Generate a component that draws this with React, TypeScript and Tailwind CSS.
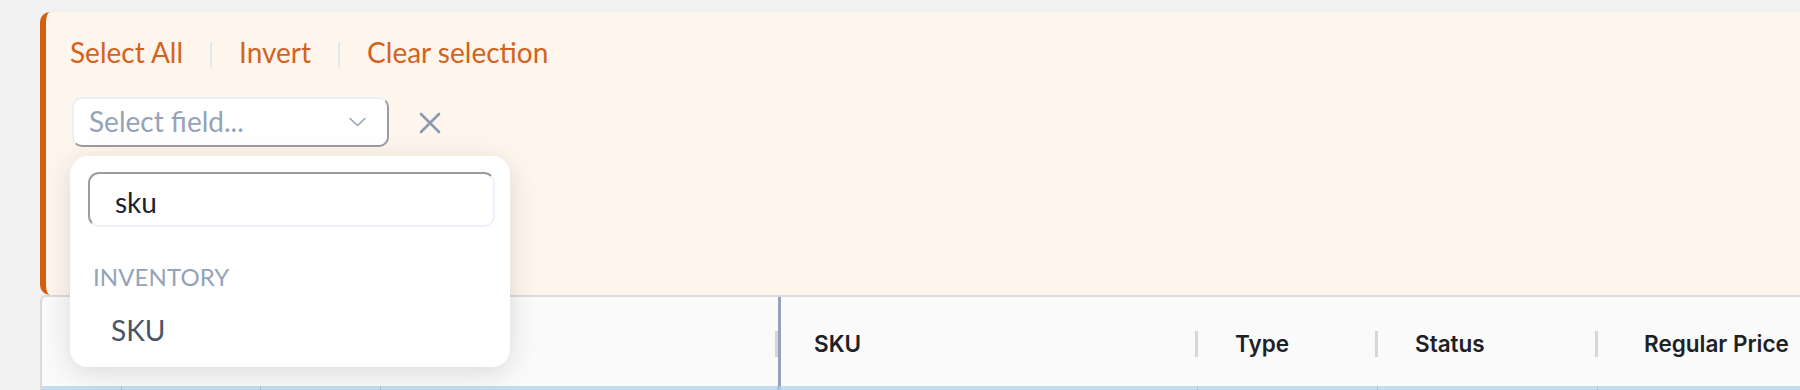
import React from 'react';

const panelFont = { fontFamily: 'Lato, "Noto Sans", sans-serif' };
const tableFont = { fontFamily: 'Inter, "Noto Sans", sans-serif' };

const columns = [
  { key: 'check', label: '', width: 'w-[80px]', pad: 'pl-[36px]' },
  { key: 'image', label: '', width: 'w-[139px]', pad: 'pl-[36px]' },
  { key: 'id', label: '', width: 'w-[120px]', pad: 'pl-[36px]' },
  { key: 'name', label: '', width: 'w-[397px]', pad: 'pl-[36px]' },
  { key: 'sku', label: 'SKU', width: 'w-[420px] border-l-[3px] border-[#94a3b8]', pad: 'pl-[33px]' },
  { key: 'type', label: 'Type', width: 'w-[180px]', pad: 'pl-[37px]' },
  { key: 'status', label: 'Status', width: 'w-[220px]', pad: 'pl-[37px]' },
  { key: 'price', label: 'Regular Price', width: 'w-[300px]', pad: 'pl-[46px]' },
];

const ChevronDown = () => (
  <svg width="17" height="10" viewBox="0 0 17 10" fill="none">
    <polyline points="1,1.5 8.5,8.5 16,1.5" stroke="#94a3b8" strokeWidth="1.6" strokeLinecap="round" strokeLinejoin="round" />
  </svg>
);

const CloseIcon = () => (
  <svg width="22" height="22" viewBox="0 0 22 22" fill="none">
    <path d="M2 2L20 20M20 2L2 20" stroke="#8a9bb1" strokeWidth="2.6" strokeLinecap="round" />
  </svg>
);

const FieldPopover = () => (
  <div className="absolute left-[-2px] top-[59px] z-20 h-[211px] w-[440px] rounded-[18px] bg-white pt-[16px] shadow-[0_6px_28px_rgba(0,0,0,0.13)]">
    <input
      readOnly
      value="sku"
      className="ml-[18px] block h-[55px] w-[407px] rounded-[11px] border-2 border-b-[#eef3fb] border-l-[#9c9c9c] border-r-[#eef3fb] border-t-[#9c9c9c] bg-white pl-[25px] pt-[5px] text-[28px] text-[#1b2233] outline-none"
      style={panelFont}
    />
    <div className="mt-[36px] pl-[23px] text-[24px] uppercase leading-[1.2] tracking-[0.1px] text-[#94a3b8]">
      Inventory
    </div>
    <div className="mt-[23px] pl-[41px] text-[28px] leading-[1.2] text-[#475569]">SKU</div>
  </div>
);

const BulkPanel = () => (
  <div
    className="h-[283px] rounded-l-[10px] border-l-[6px] border-[#d35f12] bg-[#fef5ec] pl-[24px] pt-[24px]"
    style={panelFont}
  >
    <div className="flex items-start gap-[27px] text-[28px] leading-[1.2] text-[#d4621c]">
      <button className="cursor-pointer">Select All</button>
      <span className="mt-[6px] h-[26px] w-[2px] bg-[#e3e8ef]" />
      <button className="cursor-pointer">Invert</button>
      <span className="mt-[6px] h-[26px] w-[2px] bg-[#e3e8ef]" />
      <button className="cursor-pointer">Clear selection</button>
    </div>

    <div className="ml-[2px] mt-[27px] flex items-center gap-[30px]">
      <div className="relative">
        <button className="flex h-[50px] w-[317px] items-center justify-between rounded-[10px] border-2 border-b-[#9a9ca0] border-l-[#eaf0f9] border-r-[#9a9ca0] border-t-[#eaf0f9] bg-white pl-[15px] pr-[21px] text-[28px] leading-[1.2] text-[#94a3b8]">
          <span>Select field...</span>
          <ChevronDown />
        </button>
        <FieldPopover />
      </div>
      <button className="mt-[2px]">
        <CloseIcon />
      </button>
    </div>
  </div>
);

const TableHead = () => (
  <div className="rounded-tl-[6px] border-l-2 border-t-2 border-[#dadada] bg-[#fafafa]" style={tableFont}>
    <div className="flex h-[89px]">
      {columns.map((col) => (
        <div key={col.key} className={`flex shrink-0 items-center justify-between ${col.width} ${col.pad}`}>
          <span className="pt-[4px] text-[22.5px] font-semibold text-[#1d2125]">{col.label}</span>
          <span className="mt-[4px] h-[26px] w-[3px] bg-[#d6d6d6]" />
        </div>
      ))}
    </div>
    <div className="flex h-[40px] bg-[#c6dcf1]">
      {columns.map((col) => (
        <div key={col.key} className={`shrink-0 border-r border-[#a9c3dc] ${col.width}`} />
      ))}
    </div>
  </div>
);

export default function App() {
  return (
    <div className="h-[390px] w-full overflow-hidden bg-[#f1f1f1] pl-[40px] pt-[12px]">
      <BulkPanel />
      <TableHead />
    </div>
  );
}
